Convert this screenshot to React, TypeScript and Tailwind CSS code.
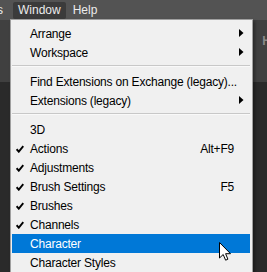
import { Fragment } from "react";

type Item = {
  label: string;
  checked?: boolean;
  shortcut?: string;
  submenu?: boolean;
  active?: boolean;
};

const groups: Item[][] = [
  [
    { label: "Arrange", submenu: true },
    { label: "Workspace", submenu: true },
  ],
  [
    { label: "Find Extensions on Exchange (legacy)..." },
    { label: "Extensions (legacy)", submenu: true },
  ],
  [
    { label: "3D" },
    { label: "Actions", checked: true, shortcut: "Alt+F9" },
    { label: "Adjustments", checked: true },
    { label: "Brush Settings", checked: true, shortcut: "F5" },
    { label: "Brushes", checked: true },
    { label: "Channels", checked: true },
    { label: "Character", active: true },
    { label: "Character Styles" },
  ],
];

const Check = () => (
  <svg width="8" height="8" viewBox="0 0 8 8" className="absolute left-[4px] top-[6px]">
    <path d="M0.6 4.2 L2.8 6.7 L7.3 1.2" fill="none" stroke="#000" strokeWidth="1.9" />
  </svg>
);

const Arrow = () => (
  <svg width="5" height="8" viewBox="0 0 5 8" className="absolute right-[6px] top-[5px]">
    <path d="M0 0 L4.5 4 L0 8 Z" fill="#000" />
  </svg>
);

const Row = ({ item }: { item: Item }) => (
  <div
    className={
      item.active
        ? "relative flex h-[19px] items-center bg-[#0078d7] pl-[18px] pr-[16px] text-white"
        : "relative flex h-[19px] items-center pl-[18px] pr-[16px] text-black"
    }
  >
    {item.checked && <Check />}
    <span className="whitespace-nowrap tracking-[-0.2px]">{item.label}</span>
    {item.shortcut && <span className="ml-auto tracking-[-0.2px]">{item.shortcut}</span>}
    {item.submenu && <Arrow />}
  </div>
);

export default function App() {
  return (
    <div className="relative h-[272px] w-[267px] overflow-hidden bg-[#2a2a2a] font-['Liberation_Sans',Arial,sans-serif] text-[12px]">
      <div className="flex h-[20px] items-center gap-[7px] bg-[#535353] text-[#ececec]">
        <span className="ml-[-3px] w-[9px]">s</span>
        <span className="rounded-[2px] bg-[#3b3b3b] px-[5px] py-[1px] leading-[15px]">Window</span>
        <span>Help</span>
      </div>
      <div className="flex h-[62px] justify-end bg-[#404040] pt-[12px]">
        <span className="mr-[-4px] font-bold text-[#8a8a8a]">H</span>
      </div>

      <div className="absolute left-[10px] top-[19px] h-[260px] w-[243px] border border-[#a0a0a0] bg-[#f0f0f0] pl-[1px] pr-[2px] pt-[4px] shadow-[2px_2px_3px_rgba(0,0,0,0.35)]">
        {groups.map((group, gi) => (
          <Fragment key={gi}>
            {gi > 0 && <div className="mb-[5px] mt-[3px] h-[2px] border-t border-[#c8c8c8] bg-white/60" />}
            {group.map((item) => (
              <Row key={item.label} item={item} />
            ))}
          </Fragment>
        ))}
      </div>

      <svg width="13" height="20" viewBox="0 0 13 20" className="absolute left-[219px] top-[242px]">
        <path
          d="M0.5 0.5 L0.5 16 L4.2 12.5 L6.6 18.2 L8.9 17.2 L6.6 11.7 L11.5 11.7 Z"
          fill="#fff"
          stroke="#000"
          strokeWidth="1"
          strokeLinejoin="round"
        />
      </svg>
    </div>
  );
}
